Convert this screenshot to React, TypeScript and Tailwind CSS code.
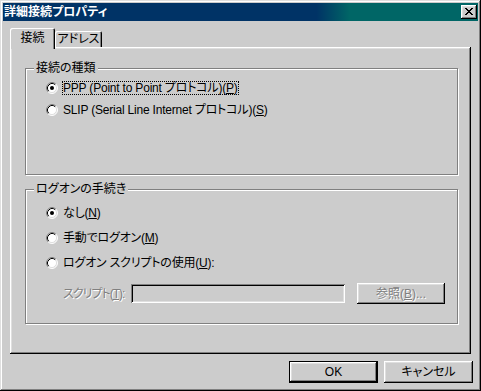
import React from 'react';

const Radio = ({ checked }: { checked?: boolean }) => (
  <svg width="12" height="12" viewBox="0 0 12 12" className="shrink-0">
    <circle cx="6" cy="6" r="5" fill="#fff" />
    <path d="M9.89 2.11 A5.5 5.5 0 0 0 2.11 9.89" fill="none" stroke="#808080" strokeWidth="1" />
    <path d="M2.11 9.89 A5.5 5.5 0 0 0 9.89 2.11" fill="none" stroke="#fff" strokeWidth="1" />
    <path d="M9.18 2.82 A4.5 4.5 0 0 0 2.82 9.18" fill="none" stroke="#000" strokeWidth="1" />
    <path d="M2.82 9.18 A4.5 4.5 0 0 0 9.18 2.82" fill="none" stroke="#dfdfdf" strokeWidth="1" />
    {checked && <circle cx="6" cy="6" r="2" fill="#000" />}
  </svg>
);

const RadioRow = ({ checked, focused, children }: { checked?: boolean; focused?: boolean; children: React.ReactNode }) => (
  <div className="flex items-center gap-[4px] h-[14px]">
    <Radio checked={checked} />
    <span
      className={
        focused
          ? 'border border-dotted border-black leading-[12px] whitespace-nowrap tracking-[-0.2px]'
          : 'border border-transparent leading-[12px] whitespace-nowrap tracking-[-0.2px]'
      }
    >
      {children}
    </span>
  </div>
);

export default function App() {
  return (
    <div className="w-[481px] h-[391px] bg-[#cccccc] p-[3px] flex flex-col text-[12px] text-black font-['Liberation_Sans','Noto_Sans_CJK_JP',sans-serif] [font-feature-settings:'palt'] shadow-[inset_-1px_-1px_#000,inset_1px_1px_#dfdfdf,inset_-2px_-2px_#808080,inset_2px_2px_#fff]">
      {/* title bar */}
      <div className="h-[18px] flex items-center justify-between pl-[1px] pr-[1px] bg-[linear-gradient(to_right,#003366_66%,#006666_73%)]">
        <span className="text-white font-bold text-[12px] leading-[14px] whitespace-nowrap">詳細接続プロパティ</span>
        <div className="w-[16px] h-[14px] bg-[#cccccc] flex items-center justify-center shadow-[inset_-1px_-1px_#000,inset_1px_1px_#fff,inset_-2px_-2px_#808080,inset_2px_2px_#dfdfdf]">
          <svg width="8" height="7" viewBox="0 0 8 7" shapeRendering="crispEdges" className="-mt-[1px]">
            <path
              d="M0 0h2v1h-2zM6 0h2v1h-2zM1 1h2v1h-2zM5 1h2v1h-2zM2 2h4v1h-4zM3 3h2v1h-2zM2 4h4v1h-4zM1 5h2v1h-2zM5 5h2v1h-2zM0 6h2v1h-2zM6 6h2v1h-2z"
              fill="#000"
            />
          </svg>
        </div>
      </div>

      {/* tabs */}
      <div className="mt-[7px] ml-[7px] h-[19px] flex items-end">
        <div className="relative z-10 w-[45px] h-[21px] -mb-[2px] bg-[#cccccc] flex justify-center pt-[3px] rounded-t-[2px] shadow-[inset_1px_1px_#fff,inset_-1px_0_#000,inset_-2px_0_#808080]">
          <span className="leading-[14px] whitespace-nowrap">接続</span>
        </div>
        <div className="w-[47px] h-[16px] bg-[#cccccc] flex justify-center pt-[1px] rounded-t-[2px] shadow-[inset_1px_1px_#fff,inset_-1px_0_#000,inset_-2px_0_#808080]">
          <span className="leading-[14px] whitespace-nowrap">アドレス</span>
        </div>
      </div>

      {/* panel */}
      <div className="ml-[7px] w-[461px] h-[307px] pl-[15px] pt-[21px] flex flex-col shadow-[inset_-1px_-1px_#000,inset_1px_1px_#fff,inset_-2px_-2px_#808080,inset_2px_2px_#dfdfdf]">
        {/* group 1 */}
        <div className="relative w-[433px] h-[107px] border border-[#808080] shadow-[inset_1px_1px_#fff,1px_1px_#fff] pl-[20px] pt-[12px] flex flex-col gap-[8px]">
          <span className="absolute -top-[8px] left-[8px] px-[2px] bg-[#cccccc] leading-[14px] whitespace-nowrap">接続の種類</span>
          <RadioRow checked focused>
            PPP (Point to Point プロトコル)(<u>P</u>)
          </RadioRow>
          <RadioRow>
            SLIP (Serial Line Internet プロトコル)(<u>S</u>)
          </RadioRow>
        </div>

        {/* group 2 */}
        <div className="relative mt-[14px] w-[433px] h-[135px] border border-[#808080] shadow-[inset_1px_1px_#fff,1px_1px_#fff] pl-[20px] pt-[16px] flex flex-col">
          <span className="absolute -top-[8px] left-[8px] px-[2px] bg-[#cccccc] leading-[14px] whitespace-nowrap">ログオンの手続き</span>
          <div className="flex flex-col gap-[11px]">
            <RadioRow checked>
              なし(<u>N</u>)
            </RadioRow>
            <RadioRow>
              手動でログオン(<u>M</u>)
            </RadioRow>
            <RadioRow>
              ログオン スクリプトの使用(<u>U</u>):
            </RadioRow>
          </div>
          <div className="mt-[13px] -ml-[20px] pl-[37px] h-[21px] flex items-center">
            <span className="w-[68px] shrink-0 leading-[14px] whitespace-nowrap tracking-[-1px] text-[#808080] [text-shadow:1px_1px_0_#fff]">
              スクリプト(<u>T</u>):
            </span>
            <div className="w-[214px] h-[19px] bg-[#cccccc] shadow-[inset_1px_1px_#808080,inset_-1px_-1px_#fff,inset_2px_2px_#000,inset_-2px_-2px_#dfdfdf]" />
            <div className="ml-[12px] w-[88px] h-[21px] flex items-center justify-center shadow-[inset_-1px_-1px_#000,inset_1px_1px_#fff,inset_-2px_-2px_#808080,inset_2px_2px_#dfdfdf]">
              <span className="leading-[14px] whitespace-nowrap text-[#808080] [text-shadow:1px_1px_0_#fff]">
                参照(<u>B</u>)...
              </span>
            </div>
          </div>
        </div>
      </div>

      {/* buttons */}
      <div className="mt-[7px] flex justify-end gap-[6px] pr-[5px]">
        <div className="w-[89px] h-[22px] border border-black flex items-center justify-center shadow-[inset_-1px_-1px_#000,inset_1px_1px_#fff,inset_-2px_-2px_#808080,inset_2px_2px_#dfdfdf]">
          <span className="leading-[14px]">OK</span>
        </div>
        <div className="w-[89px] h-[22px] flex items-center justify-center shadow-[inset_-1px_-1px_#000,inset_1px_1px_#fff,inset_-2px_-2px_#808080,inset_2px_2px_#dfdfdf]">
          <span className="leading-[14px] whitespace-nowrap">キャンセル</span>
        </div>
      </div>
    </div>
  );
}
